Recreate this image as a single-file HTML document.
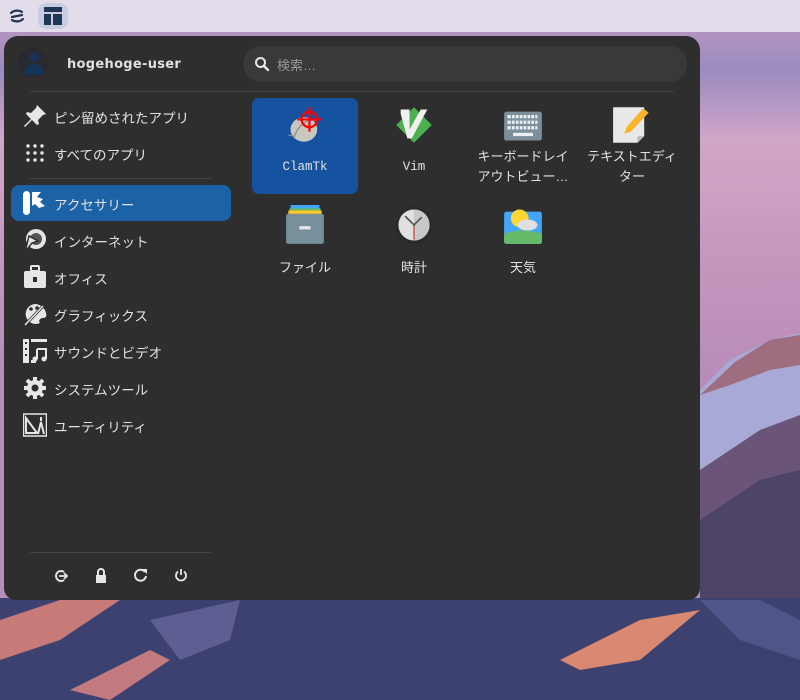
<!DOCTYPE html>
<html><head><meta charset="utf-8"><style>
*{margin:0;padding:0;box-sizing:border-box}
body{width:800px;height:700px;overflow:hidden;position:relative;font-family:"Liberation Sans","Noto Sans CJK JP",sans-serif;background:#3b3f6c}
#bg{position:absolute;inset:0}
#top{position:absolute;left:0;top:0;width:800px;height:32px;background:#e3dcea}
#panel{position:absolute;left:4px;top:36px;width:696px;height:564px;background:#2e2e2e;border-radius:14px 14px 12px 12px;color:#e6e6e6}
.t{position:absolute;font-size:13px;color:#e0e0e0;white-space:nowrap}
.cat{position:absolute;left:7px;width:220px;height:36px}
.cat svg{position:absolute;left:12px;top:6px}
.cat span{position:absolute;left:43px;top:9px;font-size:13.5px;color:#e2e2e2}
.app{position:absolute;width:106px;height:96px;text-align:center;font-size:13px;color:#e2e2e2}
.app svg{position:absolute;left:33px;top:7px}
.app .l{position:absolute;left:0;right:0;top:49px;line-height:20px}
.mono{font-family:"Liberation Mono","DejaVu Sans Mono",monospace;font-size:12.5px}
</style></head><body>
<svg id="bg" width="800" height="700">
<defs>
<linearGradient id="sky" x1="0" y1="0" x2="0" y2="1">
<stop offset="0" stop-color="#c79ac0"/><stop offset="0.1" stop-color="#9a8bc0"/><stop offset="0.2" stop-color="#d2a6c8"/><stop offset="0.4" stop-color="#c494bd"/><stop offset="0.55" stop-color="#b68cb8"/></linearGradient>
</defs>
<rect width="800" height="700" fill="url(#sky)"/>
<polygon points="700,390 730,360 760,345 790,335 800,334 800,600 700,600" fill="#a9a9d8"/>
<polygon points="700,395 735,362 770,340 800,335 800,365 770,370 730,385" fill="#9e6e80"/>
<polygon points="700,470 760,430 800,415 800,600 700,600" fill="#6a5579"/>
<polygon points="700,520 760,480 800,470 800,600 700,600" fill="#4e4468"/>
<rect x="0" y="598" width="800" height="102" fill="#3d4170"/>
<polygon points="0,620 60,600 120,600 60,640 0,660" fill="#c97b79"/>
<polygon points="560,660 640,620 700,610 640,660 580,670" fill="#d98872"/>
<polygon points="70,690 150,650 170,660 110,700" fill="#c27a7f"/>
<polygon points="150,620 240,600 230,640 180,660" fill="#5d5f92"/>
<polygon points="700,600 760,600 800,620 800,660 740,640" fill="#4f5589"/>
</svg>
<div id="top"></div>
<svg style="position:absolute;left:9px;top:8px" width="16" height="16" viewBox="0 0 16 16"><path d="M2 5c3-3 8-3 11-1M3 12c3 2 8 2 11-1M3 9L13 7" stroke="#1e3556" stroke-width="2.2" fill="none" stroke-linecap="round"/></svg>
<div style="position:absolute;left:38px;top:3px;width:30px;height:26px;border-radius:8px;background:#c9cbe0"></div>
<svg style="position:absolute;left:44px;top:7px" width="18" height="18" viewBox="0 0 18 18"><rect x="0" y="0" width="18" height="5" fill="#1e3556"/><rect x="0" y="7" width="7" height="11" fill="#1e3556"/><rect x="9" y="7" width="9" height="11" fill="#1e3556"/></svg>

<div id="panel">
<div style="position:absolute;left:14px;top:12px;width:30px;height:30px;border-radius:50%;background:#2a2a2e"></div>
<svg style="position:absolute;left:20px;top:15px" width="20" height="24" viewBox="0 0 20 24"><circle cx="10" cy="6" r="5" fill="#16345a"/><path d="M0 24c0-8 4-11 10-11s10 3 10 11z" fill="#16345a"/></svg>
<div class="t" style="left:63px;top:21px;font-weight:bold;font-size:13px;font-family:'DejaVu Sans','Noto Sans CJK JP',sans-serif;letter-spacing:0.3px">hogehoge-user</div>
<div style="position:absolute;left:26px;top:55px;width:644px;height:1px;background:#444"></div>
<div style="position:absolute;left:239px;top:10px;width:444px;height:36px;border-radius:18px;background:#393939"></div>
<svg style="position:absolute;left:250px;top:20px" width="16" height="16" viewBox="0 0 16 16"><circle cx="6.5" cy="6.5" r="4.5" stroke="#e8e8e8" stroke-width="2" fill="none"/><path d="M10 10l4 4" stroke="#e8e8e8" stroke-width="2.4" stroke-linecap="round"/></svg>
<div class="t" style="left:273px;top:19px;color:#9a9a9a">検索…</div>

<div class="cat" style="top:62px"><svg width="24" height="24" viewBox="0 0 24 24"><path d="M14 1l9 9-3 1-5 5 1 4-2 1-5-5-7 7-1-1 7-7-5-5 1-2 4 1 5-5z" fill="#e6e6e6"/></svg><span>ピン留めされたアプリ</span></div>
<div class="cat" style="top:99px"><svg width="24" height="24" viewBox="0 0 24 24" fill="#e6e6e6"><circle cx="5" cy="5" r="1.7"/><circle cx="12" cy="5" r="1.7"/><circle cx="19" cy="5" r="1.7"/><circle cx="5" cy="12" r="1.7"/><circle cx="12" cy="12" r="1.7"/><circle cx="19" cy="12" r="1.7"/><circle cx="5" cy="19" r="1.7"/><circle cx="12" cy="19" r="1.7"/><circle cx="19" cy="19" r="1.7"/></svg><span>すべてのアプリ</span></div>
<div style="position:absolute;left:26px;top:142px;width:181px;height:1px;background:#444"></div>
<div class="cat" style="top:149px;background:#1b62a7;border-radius:8px"><svg width="24" height="24" viewBox="0 0 24 24"><rect x="0" y="0" width="7" height="24" rx="3.5" fill="#fff"/><path d="M9 1h9l-4 5 6 2-3 3 5 4-6 2-4-4-3 2z" fill="#fff"/></svg><span>アクセサリー</span></div>
<div class="cat" style="top:186px"><svg width="24" height="24" viewBox="0 0 24 24"><circle cx="13" cy="11" r="10" fill="#e6e6e6"/><circle cx="13" cy="11" r="6" fill="#555"/><path d="M2 24l4-16 9 5-6 2z" fill="#e6e6e6" stroke="#2e2e2e" stroke-width="1.5"/></svg><span>インターネット</span></div>
<div class="cat" style="top:223px"><svg width="24" height="24" viewBox="0 0 24 24"><rect x="8" y="1" width="8" height="5" rx="1" fill="none" stroke="#e6e6e6" stroke-width="2"/><rect x="1" y="6" width="22" height="17" rx="2" fill="#e6e6e6"/><rect x="10" y="12" width="4" height="5" fill="#2e2e2e"/></svg><span>オフィス</span></div>
<div class="cat" style="top:260px"><svg width="24" height="24" viewBox="0 0 24 24"><path d="M12 2a10 10 0 1 0 5 19c-2-2 0-5 3-5 3 0 4-2 3-5-1-5-6-9-11-9z" fill="#e6e6e6"/><circle cx="8" cy="7" r="1.8" fill="#2e2e2e"/><circle cx="14" cy="6" r="1.8" fill="#2e2e2e"/><path d="M2 23L21 3" stroke="#2e2e2e" stroke-width="3"/><path d="M2 23L20 4" stroke="#e6e6e6" stroke-width="1.5"/></svg><span>グラフィックス</span></div>
<div class="cat" style="top:297px"><svg width="24" height="24" viewBox="0 0 24 24"><rect x="0" y="0" width="6" height="24" fill="#e6e6e6"/><rect x="8" y="0" width="16" height="3" fill="#e6e6e6"/><rect x="8" y="21" width="5" height="3" fill="#e6e6e6"/><rect x="2" y="3" width="2" height="2" fill="#2e2e2e"/><rect x="2" y="9" width="2" height="2" fill="#2e2e2e"/><rect x="2" y="15" width="2" height="2" fill="#2e2e2e"/><path d="M14 10h9v10M14 10v10" stroke="#e6e6e6" stroke-width="2" fill="none"/><circle cx="12" cy="20" r="2.5" fill="#e6e6e6"/><circle cx="21" cy="20" r="2.5" fill="#e6e6e6"/></svg><span>サウンドとビデオ</span></div>
<div class="cat" style="top:334px"><svg width="24" height="24" viewBox="0 0 24 24"><circle cx="12" cy="12" r="8" fill="#e6e6e6"/><g stroke="#e6e6e6" stroke-width="4"><path d="M12 1v22M1 12h22M4 4l16 16M20 4L4 20"/></g><circle cx="12" cy="12" r="3.5" fill="#2e2e2e"/></svg><span>システムツール</span></div>
<div class="cat" style="top:371px"><svg width="24" height="24" viewBox="0 0 24 24"><rect x="0.5" y="1" width="23" height="22" fill="none" stroke="#e6e6e6" stroke-width="1.5"/><path d="M3 5v15h11z" fill="none" stroke="#e6e6e6" stroke-width="2"/><path d="M18 4v4M15 21l3-12 3 12" stroke="#e6e6e6" stroke-width="2" fill="none"/></svg><span>ユーティリティ</span></div>

<div style="position:absolute;left:26px;top:516px;width:181px;height:1px;background:#444"></div>
<svg style="position:absolute;left:50px;top:533px" width="14" height="14" viewBox="0 0 14 14"><path d="M10 3A5 5 0 1 0 10 11" stroke="#e6e6e6" stroke-width="2" fill="none"/><path d="M5 7h8M10 4l3 3-3 3" stroke="#e6e6e6" stroke-width="1.8" fill="none"/></svg>
<svg style="position:absolute;left:90px;top:532px" width="14" height="15" viewBox="0 0 14 15"><path d="M4 7V4a3 3 0 0 1 6 0v3" stroke="#e6e6e6" stroke-width="2" fill="none"/><rect x="2" y="7" width="10" height="8" fill="#e6e6e6"/></svg>
<svg style="position:absolute;left:129px;top:532px" width="15" height="15" viewBox="0 0 15 15"><path d="M12 4A5.5 5.5 0 1 0 13 8" stroke="#e6e6e6" stroke-width="2" fill="none"/><path d="M9 1h5v5z" fill="#e6e6e6"/></svg>
<svg style="position:absolute;left:170px;top:532px" width="14" height="14" viewBox="0 0 14 14"><path d="M4 3.5A5 5 0 1 0 10 3.5" stroke="#e6e6e6" stroke-width="1.8" fill="none"/><path d="M7 1v6" stroke="#e6e6e6" stroke-width="1.8"/></svg>

<div class="app" style="left:248px;top:62px;background:#1553a0;border-radius:7px"><svg width="40" height="40" viewBox="0 0 36 36"><ellipse cx="17" cy="22" rx="12" ry="11" fill="#c9c7c1"/><path d="M8 30c3-10 10-18 20-16" stroke="#888" fill="none"/><path d="M3 27l5 1" stroke="#999"/><circle cx="22" cy="13" r="7" stroke="#f00" stroke-width="2" fill="none"/><path d="M22 2v22M11 13h22" stroke="#f00" stroke-width="2"/></svg><div class="l mono" style="top:59px">ClamTk</div></div>
<div class="app" style="left:357px;top:62px"><svg width="40" height="40" viewBox="0 0 36 36"><path d="M18 2l16 16-16 16L2 18z" fill="#4caf50"/><path d="M6 4h8v18l10-18h6L16 30h-4L6 8z" fill="#f0f0f0"/></svg><div class="l mono" style="top:59px">Vim</div></div>
<div class="app" style="left:466px;top:62px"><svg width="40" height="40" viewBox="0 0 36 36"><rect x="1" y="6" width="34" height="26" rx="2" fill="#7b8e9a"/><g fill="#e8eef2"><rect x="4" y="9" width="27" height="3"/><rect x="4" y="14" width="27" height="3"/><rect x="4" y="19" width="27" height="3"/><rect x="9" y="25" width="18" height="3"/></g><g stroke="#7b8e9a" stroke-width="1"><path d="M7.5 9v14M11 9v14M14.5 9v14M18 9v14M21.5 9v14M25 9v14M28.5 9v14"/></g></svg><div class="l">キーボードレイ<br>アウトビュー…</div></div>
<div class="app" style="left:575px;top:62px"><svg width="40" height="40" viewBox="0 0 36 36"><path d="M1 2h28v26l-6 6H1z" fill="#e8e8e8"/><path d="M23 34v-6h6z" fill="#bbb"/><path d="M28 3l5 4-16 17-6 2 2-6z" fill="#fbb52b"/></svg><div class="l">テキストエディ<br>ター</div></div>
<div class="app" style="left:248px;top:162px"><svg width="40" height="40" viewBox="0 0 36 36"><rect x="5" y="0" width="26" height="4" fill="#42a5f5"/><rect x="4" y="3" width="28" height="3" fill="#66bb6a"/><rect x="3" y="5" width="30" height="3" fill="#ffca28"/><rect x="1" y="8" width="34" height="27" rx="2" fill="#78909c"/><rect x="13" y="19" width="10" height="3" fill="#e0e6ea"/></svg><div class="l" style="top:60px">ファイル</div></div>
<div class="app" style="left:357px;top:162px"><svg width="40" height="40" viewBox="0 0 36 36"><circle cx="18" cy="18" r="17" fill="#2a2a2a"/><circle cx="18" cy="18" r="14" fill="#e0e0e0"/><path d="M18 4a14 14 0 0 1 0 28z" fill="#c8c8c8"/><path d="M10 10l8 8 7-7M18 18v13" stroke="#555" stroke-width="1.5" fill="none"/><path d="M18 19v12" stroke="#e57373" stroke-width="1.5"/></svg><div class="l" style="top:60px">時計</div></div>
<div class="app" style="left:466px;top:162px"><svg width="40" height="40" viewBox="0 0 36 36"><rect x="1" y="6" width="34" height="29" rx="2" fill="#42a5f5"/><path d="M1 26c10-4 22-4 34 0v7a2 2 0 0 1-2 2H3a2 2 0 0 1-2-2z" fill="#66bb6a"/><circle cx="15" cy="12" r="8" fill="#fdd835"/><ellipse cx="22" cy="18" rx="9" ry="5" fill="#e0e0e0"/></svg><div class="l" style="top:60px">天気</div></div>
</div>
</body></html>
